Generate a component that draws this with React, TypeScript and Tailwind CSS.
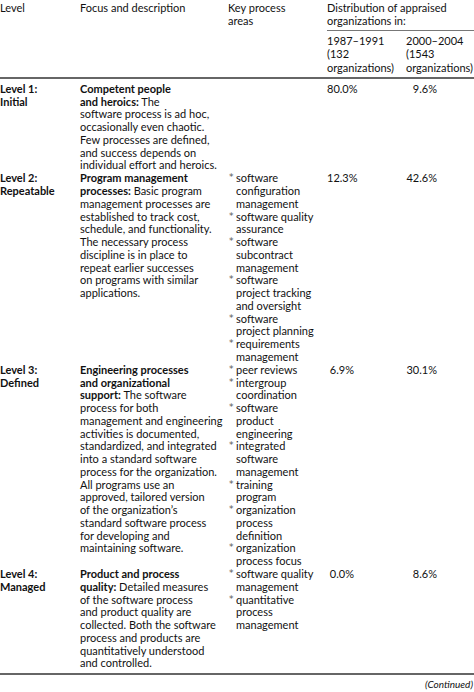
import React from "react";

type Row = {
  label: string[];
  title: string[];
  titleTail: string;
  desc: string[];
  areas: string[][];
  p1: string;
  p2: string;
};

const rows: Row[] = [
  {
    label: ["Level 1:", "Initial"],
    title: ["Competent people", "and heroics:"],
    titleTail: " The",
    desc: [
      "software process is ad hoc,",
      "occasionally even chaotic.",
      "Few processes are defined,",
      "and success depends on",
      "individual effort and heroics.",
    ],
    areas: [],
    p1: "80.0%",
    p2: "9.6%",
  },
  {
    label: ["Level 2:", "Repeatable"],
    title: ["Program management", "processes:"],
    titleTail: " Basic program",
    desc: [
      "management processes are",
      "established to track cost,",
      "schedule, and functionality.",
      "The necessary process",
      "discipline is in place to",
      "repeat earlier successes",
      "on programs with similar",
      "applications.",
    ],
    areas: [
      ["software", "configuration", "management"],
      ["software quality", "assurance"],
      ["software", "subcontract", "management"],
      ["software", "project tracking", "and oversight"],
      ["software", "project planning"],
      ["requirements", "management"],
    ],
    p1: "12.3%",
    p2: "42.6%",
  },
  {
    label: ["Level 3:", "Defined"],
    title: ["Engineering processes", "and organizational", "support:"],
    titleTail: " The software",
    desc: [
      "process for both",
      "management and engineering",
      "activities is documented,",
      "standardized, and integrated",
      "into a standard software",
      "process for the organization.",
      "All programs use an",
      "approved, tailored version",
      "of the organization\u2019s",
      "standard software process",
      "for developing and",
      "maintaining software.",
    ],
    areas: [
      ["peer reviews"],
      ["intergroup", "coordination"],
      ["software", "product", "engineering"],
      ["integrated", "software", "management"],
      ["training", "program"],
      ["organization", "process", "definition"],
      ["organization", "process focus"],
    ],
    p1: "6.9%",
    p2: "30.1%",
  },
  {
    label: ["Level 4:", "Managed"],
    title: ["Product and process", "quality:"],
    titleTail: " Detailed measures",
    desc: [
      "of the software process",
      "and product quality are",
      "collected. Both the software",
      "process and products are",
      "quantitatively understood",
      "and controlled.",
    ],
    areas: [
      ["software quality", "management"],
      ["quantitative", "process", "management"],
    ],
    p1: "0.0%",
    p2: "8.6%",
  },
];

function Line({ children }: { children: React.ReactNode }) {
  return <div className="h-[12.78px] whitespace-nowrap">{children}</div>;
}

export default function App() {
  return (
    <div
      className="w-[474px] h-[692px] overflow-hidden bg-white text-[#111] text-[11px] leading-[12.78px]"
      style={{ fontFamily: "Lato, 'Liberation Sans', sans-serif" }}
    >
      {/* Header */}
      <div className="grid grid-cols-[80px_148px_99px_1fr] leading-[13px]">
        <div className="pt-px">Level</div>
        <div className="pt-px">Focus and description</div>
        <div className="pt-px">
          <div>Key process</div>
          <div>areas</div>
        </div>
        <div className="pt-px">
          <div className="whitespace-nowrap">Distribution of appraised</div>
          <div className="whitespace-nowrap">organizations in:</div>
          <div className="mt-[3px] h-px bg-[#777]" />
          <div className="grid grid-cols-[79px_1fr] pt-[3px] leading-[13.3px]">
            <div>
              <div>1987–1991</div>
              <div>(132</div>
              <div>organizations)</div>
            </div>
            <div className="whitespace-nowrap">
              <div>2000–2004</div>
              <div>(1543</div>
              <div>organizations)</div>
            </div>
          </div>
        </div>
      </div>
      <div className="mt-[3px] h-[2px] bg-[#666]" />

      {/* Body */}
      <div className="pt-[4px]">
        {rows.map((r, i) => (
          <div key={i} className="grid grid-cols-[80px_148px_99px_79px_1fr]">
            <div className="font-bold">
              {r.label.map((l) => (
                <Line key={l}>{l}</Line>
              ))}
            </div>
            <div>
              {r.title.map((t, j) => (
                <Line key={t}>
                  <span className="font-bold">{t}</span>
                  {j === r.title.length - 1 ? r.titleTail : null}
                </Line>
              ))}
              {r.desc.map((d) => (
                <Line key={d}>{d}</Line>
              ))}
            </div>
            <div>
              {r.areas.map((a, k) => (
                <div key={k} className="flex">
                  <div
                    className="w-[8px] shrink-0 text-[9px] text-[#555] leading-[10px] pl-px"
                    style={{ fontFamily: "'DejaVu Sans', sans-serif" }}
                  >
                    *
                  </div>
                  <div>
                    {a.map((t, m) => (
                      <Line key={m}>{t}</Line>
                    ))}
                  </div>
                </div>
              ))}
            </div>
            <div>
              <div className="w-[27px] text-right whitespace-nowrap">
                <Line>{r.p1}</Line>
              </div>
            </div>
            <div>
              <div className="w-[31px] text-right whitespace-nowrap">
                <Line>{r.p2}</Line>
              </div>
            </div>
          </div>
        ))}
      </div>

      <div className="mt-[3px] h-[2px] bg-[#666]" />
      <div className="mt-[3px] text-right italic text-[10px] leading-[13px] pr-px">(Continued)</div>
    </div>
  );
}
